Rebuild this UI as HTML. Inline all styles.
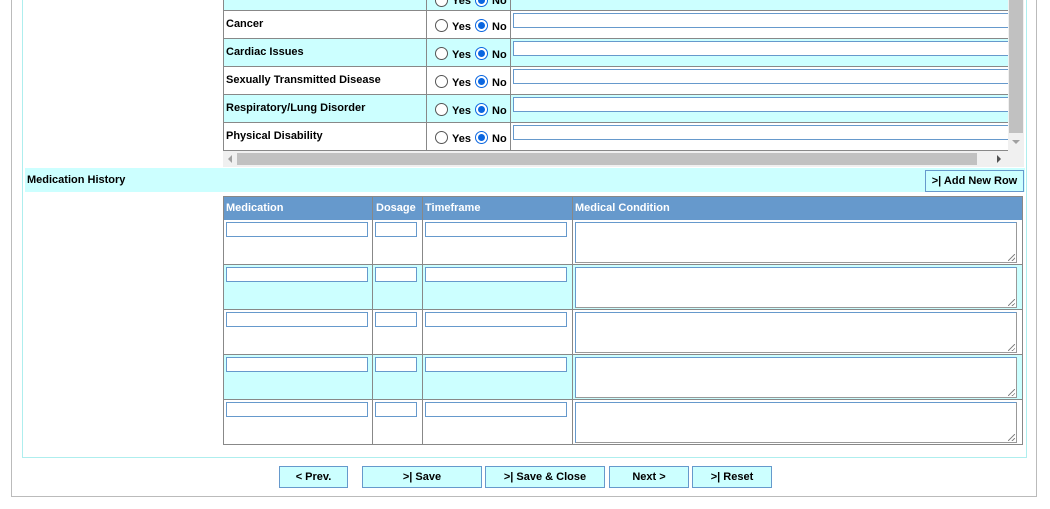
<!DOCTYPE html>
<html><head><style>
*{box-sizing:border-box;margin:0;padding:0}
body{width:1050px;height:509px;background:#fff;position:relative;overflow:hidden;font-family:"Liberation Sans",sans-serif;font-size:11px;font-weight:bold;color:#000}
.a{position:absolute}
.inp{position:absolute;border:1px solid #6699cc;background:#fff}
.ta{border-right-color:#999;border-bottom-color:#999}
.ta::after{content:"";position:absolute;right:1px;bottom:1px;width:7px;height:7px;background:linear-gradient(135deg,transparent 45%,#888 45%,#888 55%,transparent 55%,transparent 75%,#888 75%,#888 85%,transparent 85%)}
.rad{position:absolute;width:13px;height:13px;border-radius:50%;border:1px solid #555;background:#fff}
.rad.on{border-color:#0a66e0}
.rad.on::after{content:"";position:absolute;left:2px;top:2px;width:7px;height:7px;border-radius:50%;background:#0a66e0}
.btn{position:absolute;top:466px;height:22px;background:#ccffff;border:1px solid #6699cc;text-align:center;line-height:20px;font-size:11px}
</style></head><body>
<div class="a" style="left:11px;top:0;width:1026px;height:497px;border:1px solid #bbb;border-top:none"></div>
<div class="a" style="left:22px;top:0;width:1005px;height:458px;border:1px solid #aeeeee;border-top:none"></div>

<div class="a" style="left:223px;top:0;width:785px;height:151px;overflow:hidden">
<div class="a" style="left:0;top:0;width:785px;height:10px;background:#ccffff"></div>
<div class="a" style="left:0;top:38px;width:785px;height:28px;background:#ccffff"></div>
<div class="a" style="left:0;top:94px;width:785px;height:28px;background:#ccffff"></div>
<div class="a" style="left:0;top:0;width:1px;height:151px;background:#888"></div>
<div class="a" style="left:203px;top:0;width:1px;height:151px;background:#888"></div>
<div class="a" style="left:287px;top:0;width:1px;height:151px;background:#888"></div>
<div class="a" style="left:0;top:10px;width:785px;height:1px;background:#888"></div>
<div class="a" style="left:0;top:38px;width:785px;height:1px;background:#888"></div>
<div class="a" style="left:0;top:66px;width:785px;height:1px;background:#888"></div>
<div class="a" style="left:0;top:94px;width:785px;height:1px;background:#888"></div>
<div class="a" style="left:0;top:122px;width:785px;height:1px;background:#888"></div>
<div class="a" style="left:0;top:150px;width:785px;height:1px;background:#888"></div>
</div>
<div class="a" style="left:226px;top:18px">Cancer</div>
<div class="a" style="left:226px;top:46px">Cardiac Issues</div>
<div class="a" style="left:226px;top:74px">Sexually Transmitted Disease</div>
<div class="a" style="left:226px;top:102px">Respiratory/Lung Disorder</div>
<div class="a" style="left:226px;top:130px">Physical Disability</div>
<div class="rad" style="left:435px;top:-6px"></div><div class="rad on" style="left:475px;top:-6px"></div>
<div class="a" style="left:452px;top:-5px">Yes</div><div class="a" style="left:492px;top:-5px">No</div>
<div class="rad" style="left:435px;top:19px"></div><div class="rad on" style="left:475px;top:19px"></div><div class="a" style="left:452px;top:21px">Yes</div><div class="a" style="left:492px;top:21px">No</div>
<div class="rad" style="left:435px;top:47px"></div><div class="rad on" style="left:475px;top:47px"></div><div class="a" style="left:452px;top:49px">Yes</div><div class="a" style="left:492px;top:49px">No</div>
<div class="rad" style="left:435px;top:75px"></div><div class="rad on" style="left:475px;top:75px"></div><div class="a" style="left:452px;top:77px">Yes</div><div class="a" style="left:492px;top:77px">No</div>
<div class="rad" style="left:435px;top:103px"></div><div class="rad on" style="left:475px;top:103px"></div><div class="a" style="left:452px;top:105px">Yes</div><div class="a" style="left:492px;top:105px">No</div>
<div class="rad" style="left:435px;top:131px"></div><div class="rad on" style="left:475px;top:131px"></div><div class="a" style="left:452px;top:133px">Yes</div><div class="a" style="left:492px;top:133px">No</div>
<div class="inp" style="left:513px;top:13px;width:500px;height:15px;border-right:none"></div>
<div class="inp" style="left:513px;top:41px;width:500px;height:15px;border-right:none"></div>
<div class="inp" style="left:513px;top:69px;width:500px;height:15px;border-right:none"></div>
<div class="inp" style="left:513px;top:97px;width:500px;height:15px;border-right:none"></div>
<div class="inp" style="left:513px;top:125px;width:500px;height:15px;border-right:none"></div>
<div class="a" style="left:1008px;top:0;width:16px;height:151px;background:#f0f0f0"></div>
<div class="a" style="left:1009px;top:0;width:14px;height:133px;background:#c1c1c1"></div>
<div class="a" style="left:1012px;top:140px;width:0;height:0;border-left:4px solid transparent;border-right:4px solid transparent;border-top:4px solid #a0a0a0"></div>
<div class="a" style="left:223px;top:151px;width:801px;height:16px;background:#f0f0f0"></div>
<div class="a" style="left:237px;top:153px;width:740px;height:12px;background:#c1c1c1"></div>
<div class="a" style="left:228px;top:155px;width:0;height:0;border-top:4px solid transparent;border-bottom:4px solid transparent;border-right:4px solid #a0a0a0"></div>
<div class="a" style="left:997px;top:155px;width:0;height:0;border-top:4px solid transparent;border-bottom:4px solid transparent;border-left:4px solid #505050"></div>

<div class="a" style="left:25px;top:168px;width:1000px;height:24px;background:#ccffff"></div>
<div class="a" style="left:27px;top:174px">Medication History</div>
<div class="a" style="left:925px;top:170px;width:99px;height:22px;border:1px solid #6699cc;background:#ccffff;text-align:center;line-height:20px">&gt;| Add New Row</div>

<div class="a" style="left:223px;top:196px;width:800px;height:249px;border:1px solid #888">
<div class="a" style="left:0;top:0;width:798px;height:23px;background:#6699cc"></div>
<div class="a" style="left:0;top:68px;width:798px;height:45px;background:#ccffff"></div>
<div class="a" style="left:0;top:158px;width:798px;height:45px;background:#ccffff"></div>
<div class="a" style="left:148px;top:0;width:1px;height:248px;background:#888"></div>
<div class="a" style="left:198px;top:0;width:1px;height:248px;background:#888"></div>
<div class="a" style="left:348px;top:0;width:1px;height:248px;background:#888"></div>
<div class="a" style="left:0;top:67px;width:798px;height:1px;background:#888"></div>
<div class="a" style="left:0;top:112px;width:798px;height:1px;background:#888"></div>
<div class="a" style="left:0;top:157px;width:798px;height:1px;background:#888"></div>
<div class="a" style="left:0;top:202px;width:798px;height:1px;background:#888"></div>
</div>
<div class="a" style="left:226px;top:202px;color:#fff">Medication</div>
<div class="a" style="left:376px;top:202px;color:#fff">Dosage</div>
<div class="a" style="left:425px;top:202px;color:#fff">Timeframe</div>
<div class="a" style="left:575px;top:202px;color:#fff">Medical Condition</div>

<div class="inp" style="left:226px;top:222px;width:142px;height:15px"></div><div class="inp" style="left:375px;top:222px;width:42px;height:15px"></div><div class="inp" style="left:425px;top:222px;width:142px;height:15px"></div><div class="inp ta" style="left:575px;top:222px;width:442px;height:41px"></div>
<div class="inp" style="left:226px;top:267px;width:142px;height:15px"></div><div class="inp" style="left:375px;top:267px;width:42px;height:15px"></div><div class="inp" style="left:425px;top:267px;width:142px;height:15px"></div><div class="inp ta" style="left:575px;top:267px;width:442px;height:41px"></div>
<div class="inp" style="left:226px;top:312px;width:142px;height:15px"></div><div class="inp" style="left:375px;top:312px;width:42px;height:15px"></div><div class="inp" style="left:425px;top:312px;width:142px;height:15px"></div><div class="inp ta" style="left:575px;top:312px;width:442px;height:41px"></div>
<div class="inp" style="left:226px;top:357px;width:142px;height:15px"></div><div class="inp" style="left:375px;top:357px;width:42px;height:15px"></div><div class="inp" style="left:425px;top:357px;width:142px;height:15px"></div><div class="inp ta" style="left:575px;top:357px;width:442px;height:41px"></div>
<div class="inp" style="left:226px;top:402px;width:142px;height:15px"></div><div class="inp" style="left:375px;top:402px;width:42px;height:15px"></div><div class="inp" style="left:425px;top:402px;width:142px;height:15px"></div><div class="inp ta" style="left:575px;top:402px;width:442px;height:41px"></div>

<div class="btn" style="left:279px;width:69px">&lt; Prev.</div>
<div class="btn" style="left:362px;width:120px">&gt;| Save</div>
<div class="btn" style="left:485px;width:120px">&gt;| Save &amp; Close</div>
<div class="btn" style="left:609px;width:80px">Next &gt;</div>
<div class="btn" style="left:692px;width:80px">&gt;| Reset</div>
</body></html>
